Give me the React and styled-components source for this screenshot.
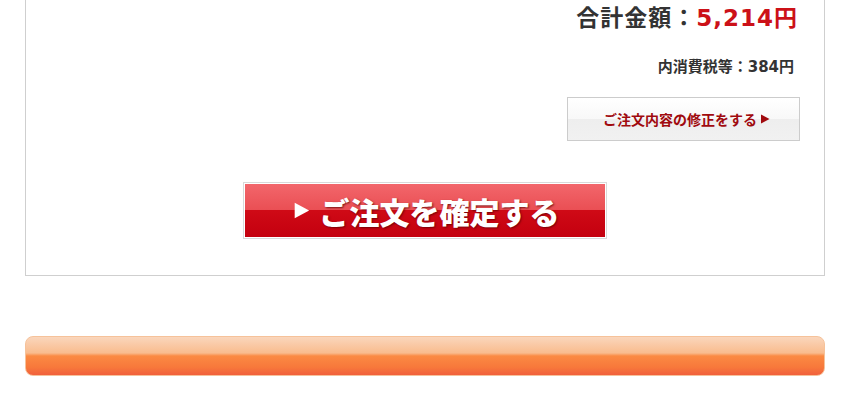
import styled, { createGlobalStyle } from 'styled-components';

const Global = createGlobalStyle`
  html, body { margin: 0; padding: 0; background: #fff; }
  body { font-family: "DejaVu Sans", "Noto Sans CJK JP", sans-serif; }
`;

const Page = styled.div`
  padding: 0 26px 0 25px;
`;

const OrderBox = styled.div`
  border: 1px solid #cfcfcf;
  border-top: none;
  padding: 0 24px 36px;
`;

const Summary = styled.div`
  display: flex;
  flex-direction: column;
  align-items: flex-end;
`;

const TotalLine = styled.div`
  margin-right: 2px;
  font-size: 23px;
  font-weight: 700;
  line-height: 36px;
  letter-spacing: 1px;
  color: #333;
`;

const Amount = styled.span`
  color: #cc1118;
`;

const TaxLine = styled.div`
  margin-top: 21px;
  margin-right: 6px;
  font-size: 15px;
  font-weight: 700;
  line-height: 20px;
  color: #333;
`;

const EditButton = styled.button`
  margin-top: 20px;
  width: 233px;
  height: 44px;
  border: 1px solid #cccccc;
  background: linear-gradient(#ffffff 0%, #f8f8f8 50%, #eeeeee 51%, #f1f1f1 100%);
  display: flex;
  align-items: center;
  justify-content: center;
  gap: 3px;
  padding: 0 0 0 6px;
  font-family: inherit;
  font-size: 14px;
  font-weight: 700;
  color: #a00a0e;
  cursor: pointer;
`;

const ConfirmRow = styled.div`
  margin-top: 41px;
  display: flex;
  justify-content: center;
`;

const ConfirmButton = styled.button`
  width: 364px;
  height: 57px;
  border: 1px solid #d9d9d9;
  padding: 1px;
  background: #fff;
  cursor: pointer;
  font-family: inherit;
`;

const ConfirmFace = styled.span`
  display: flex;
  align-items: center;
  justify-content: center;
  gap: 10px;
  height: 100%;
  padding-left: 2px;
  background: linear-gradient(#f2666b 0%, #ea4f54 49%, #cf0a16 50%, #c4000f 100%);
  color: #fff;
  font-size: 30px;
  font-weight: 900;
  text-shadow: 1px 1px 2px rgba(90, 0, 0, 0.75);
`;

const Spacer = styled.div`
  height: 60px;
`;

const OrangeBar = styled.div`
  height: 40px;
  border-radius: 8px;
  border: 1px solid #f6c29a;
  box-sizing: border-box;
  background: linear-gradient(#fad6bc 0%, #f9bc8e 42%, #fb8a43 50%, #f7783b 80%, #f1603c 100%);
`;

function Triangle({ size, color }) {
  return (
    <svg width={size} height={size} viewBox="0 0 10 10" aria-hidden="true">
      <path d="M1 0.5 L9.5 5 L1 9.5 Z" fill={color} />
    </svg>
  );
}

export default function App() {
  return (
    <>
      <Global />
      <Page>
        <OrderBox>
          <Summary>
            <TotalLine>
              合計金額：<Amount>5,214円</Amount>
            </TotalLine>
            <TaxLine>内消費税等：384円</TaxLine>
            <EditButton>
              ご注文内容の修正をする
              <Triangle size={10} color="#a00a0e" />
            </EditButton>
          </Summary>
          <ConfirmRow>
            <ConfirmButton>
              <ConfirmFace>
                <Triangle size={17} color="#fff" />
                ご注文を確定する
              </ConfirmFace>
            </ConfirmButton>
          </ConfirmRow>
        </OrderBox>
        <Spacer />
        <OrangeBar />
      </Page>
    </>
  );
}
